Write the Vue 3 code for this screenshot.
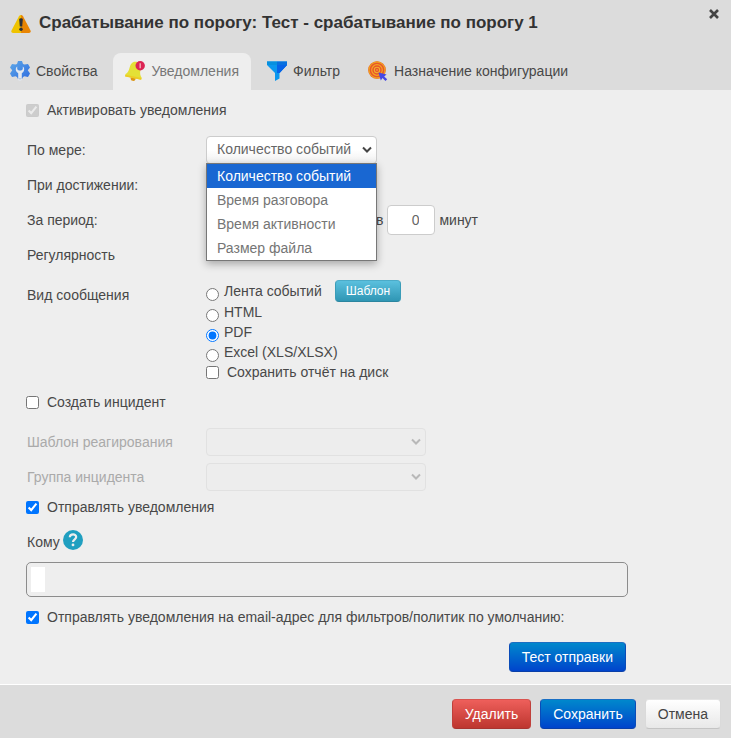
<script setup>
import { ref } from 'vue'

const measures = ['Количество событий', 'Время разговора', 'Время активности', 'Размер файла']
const measure = ref(measures[0])
const period = ref('0')
const format = ref('pdf')
const activate = ref(true)
const saveToDisk = ref(false)
const createIncident = ref(false)
const sendNotices = ref(true)
const sendDefault = ref(true)
const recipients = ref('')
</script>

<template>
  <div class="dialog">
    <header class="head">
      <div class="title-row">
        <svg class="warn" viewBox="0 0 20 18">
          <path d="M10 0Q11.300 0 12 1.200L19.500 15.500Q20.300 18 18 18H10Z" fill="#e88504" />
          <path d="M10 0Q8.700 0 8 1.200L.5 15.500Q-.3 18 2 18H10Z" fill="#efc300" />
          <path d="M8.200 4.500Q8.200 3.200 10 3.200T11.800 4.500L11.200 11.500H8.800Z" fill="#2d3038" />
          <circle cx="10" cy="14.300" r="1.700" fill="#2d3038" />
        </svg>
        <h1>Срабатывание по порогу: Тест - срабатывание по порогу 1</h1>
        <button class="close" type="button" aria-label="Закрыть">
          <svg viewBox="0 0 12 12"><path d="M2 2L10 10M10 2L2 10" stroke="#444" stroke-width="2.600" /></svg>
        </button>
      </div>
      <nav class="tabs">
        <a href="#" class="tab">
          <svg viewBox="0 0 20 20">
            <defs>
              <linearGradient id="gearFill" x1="0" y1="0" x2="1" y2="1">
                <stop offset="0" stop-color="#5fa9e8" /><stop offset="1" stop-color="#2f6de0" />
              </linearGradient>
            </defs>
            <path d="M8 0H12L13 3L14.500 3.600L18 3L20 6.500L17.800 9.300L20 12.500L18 16L14.500 15.200L13 16L12 18H8L7 16L5.500 15.200L2 16L0 12.500L2.200 9.300L0 6.500L2 3L5.500 3.600L7 3Z" fill="url(#gearFill)" />
            <path d="M7.200 5.500V8.200L8.800 9.500H11.200L12.800 8.200V5.500C14.400 6.600 14.800 9.500 13 11.200L11.800 12.300V18.200Q11.800 19.800 10 19.800T8.200 18.200V12.300L7 11.200C5.200 9.500 5.600 6.600 7.200 5.500Z" fill="#e3e8ef" />
            <circle cx="10" cy="17.800" r=".7" fill="#8fb0dc" />
          </svg>
          <span>Свойства</span>
        </a>
        <a href="#" class="tab active" aria-current="page">
          <svg viewBox="0 0 20 20">
            <g transform="rotate(12 9 11)">
              <circle cx="9.500" cy="17.400" r="2.500" fill="#dc9512" />
              <path d="M9.300 .5C5.200 .5 4 3.800 3.800 7.500C3.700 11 3.100 13 1.200 14.800V17H17.600V14.800C15.500 13 15 11 14.900 7.500C14.700 3.800 13.400 .5 9.300 .5Z" fill="#e4e036" />
              <path d="M1.200 15.400H17.600V17.200H1.200Z" fill="#edcb25" />
            </g>
            <circle cx="15.200" cy="4.700" r="4.700" fill="#dc2454" />
            <path d="M15.200 2.200V7.200" stroke="#f2a6b4" stroke-width="1.500" />
          </svg>
          <span>Уведомления</span>
        </a>
        <a href="#" class="tab">
          <svg viewBox="0 0 20 20">
            <path d="M0 .5H20V4L12.500 12V17.500L8 20V12L0 4Z" fill="#0b97ee" />
            <path d="M10 .5H20V4L12.500 12H10Z" fill="#0870df" />
            <path d="M0 .5H10V4H0Z" fill="#0790df" />
            <path d="M10 4H20L12.500 12H10Z" fill="#0763e8" />
          </svg>
          <span>Фильтр</span>
        </a>
        <a href="#" class="tab">
          <svg viewBox="0 0 20 20">
            <circle cx="9" cy="9" r="8.800" fill="#e9542b" />
            <circle cx="9" cy="9" r="8" fill="none" stroke="#f0a020" stroke-width="1.300" />
            <circle cx="9" cy="9" r="5.300" fill="none" stroke="#f2a823" stroke-width="1.200" />
            <circle cx="9" cy="9" r="2.700" fill="none" stroke="#f2b02d" stroke-width="1.100" />
            <circle cx="9" cy="9" r=".8" fill="#f5c040" />
            <path d="M10.500 11.500L18.600 13.500L16.200 15.500L19.200 18.200L17.500 20L14.500 17L12.800 19.500Z" fill="#4648e4" />
          </svg>
          <span>Назначение конфигурации</span>
        </a>
      </nav>
    </header>

    <main class="body">
      <label class="check first"><input v-model="activate" type="checkbox" disabled /><span>Активировать уведомления</span></label>

      <div class="row">
        <label for="measure">По мере:</label>
        <div class="picker">
          <select id="measure" v-model="measure" class="select">
            <option v-for="m in measures" :key="m">{{ m }}</option>
          </select>
          <svg class="chevron" viewBox="0 0 10 8"><path d="M1 1.500L5 5.500L9 1.500" /></svg>
          <ul class="menu" role="listbox">
            <li v-for="m in measures" :key="m" role="option" :aria-selected="m === measure" :class="{ chosen: m === measure }">{{ m }}</li>
          </ul>
        </div>
      </div>
      <div class="row"><span>При достижении:</span></div>
      <div class="row">
        <span>За период:</span>
        <div class="period">
          <label for="minutes">в</label>
          <input id="minutes" v-model="period" type="text" />
          <span>минут</span>
        </div>
      </div>
      <div class="row"><span>Регулярность</span></div>

      <div class="row kinds">
        <span class="kinds-label">Вид сообщения</span>
        <div class="options">
          <div class="feed">
            <label class="radio"><input v-model="format" type="radio" name="format" value="feed" /><span>Лента событий</span></label>
            <button type="button" class="btn info">Шаблон</button>
          </div>
          <label class="radio"><input v-model="format" type="radio" name="format" value="html" /><span>HTML</span></label>
          <label class="radio"><input v-model="format" type="radio" name="format" value="pdf" /><span>PDF</span></label>
          <label class="radio"><input v-model="format" type="radio" name="format" value="excel" /><span>Excel (XLS/XLSX)</span></label>
          <label class="check"><input v-model="saveToDisk" type="checkbox" /><span>Сохранить отчёт на диск</span></label>
        </div>
      </div>

      <label class="check incident"><input v-model="createIncident" type="checkbox" /><span>Создать инцидент</span></label>

      <div class="row off">
        <label for="reaction">Шаблон реагирования</label>
        <div class="picker wide">
          <select id="reaction" class="select" disabled></select>
          <svg class="chevron" viewBox="0 0 10 8"><path d="M1 1.500L5 5.500L9 1.500" /></svg>
        </div>
      </div>
      <div class="row off">
        <label for="group">Группа инцидента</label>
        <div class="picker wide">
          <select id="group" class="select" disabled></select>
          <svg class="chevron" viewBox="0 0 10 8"><path d="M1 1.500L5 5.500L9 1.500" /></svg>
        </div>
      </div>

      <label class="check send"><input v-model="sendNotices" type="checkbox" /><span>Отправлять уведомления</span></label>

      <div class="mail">
        <div class="to">
          <label for="recipients">Кому</label>
          <svg viewBox="0 0 20 20">
            <circle cx="10" cy="10" r="10" fill="#209fc0" />
            <path d="M6.800 7.200C7 3.600 13.300 3.500 13.200 7.100C13.200 9.300 10 9.400 10 12" fill="none" stroke="#eee" stroke-width="2.200" />
            <circle cx="10" cy="14.900" r="1.400" fill="#eee" />
          </svg>
        </div>
        <div class="tokens"><input id="recipients" v-model="recipients" type="text" /></div>
        <label class="check default"><input v-model="sendDefault" type="checkbox" /><span>Отправлять уведомления на email-адрес для фильтров/политик по умолчанию:</span></label>
        <button type="button" class="btn primary test">Тест отправки</button>
      </div>
    </main>

    <footer class="foot">
      <button type="button" class="btn danger">Удалить</button>
      <button type="button" class="btn primary">Сохранить</button>
      <button type="button" class="btn plain">Отмена</button>
    </footer>
  </div>
</template>

<style>
body {
  margin: 0;
  background: #eee;
}
</style>

<style scoped>
.dialog {
  display: flex;
  flex-direction: column;
  min-height: 100vh;
  background: #eee;
  color: #484848;
  font: 14px/20px "Liberation Sans", Arial, sans-serif;
}
.dialog * {
  box-sizing: border-box;
}
button,
input,
select {
  margin: 0;
  font: inherit;
}
svg {
  display: block;
  flex: none;
}
.head {
  background: #dcdcdc;
}
.title-row {
  display: flex;
  align-items: flex-start;
  gap: 8px;
  height: 53px;
  padding: 8px 11px 0;
}
.warn {
  width: 20px;
  height: 18px;
  margin-top: 7px;
}
h1 {
  flex: 1;
  margin: 0;
  font-size: 17px;
  line-height: 30px;
  color: #333;
}
.close {
  padding: 0;
  border: 0;
  background: none;
}
.close svg {
  width: 12px;
  height: 12px;
}
.tabs {
  display: flex;
  gap: 4px;
  padding-left: 10px;
}
.tab {
  display: flex;
  align-items: center;
  gap: 6px;
  height: 37px;
  padding: 0 12px 1px;
  border-radius: 8px 8px 0 0;
  color: #484848;
  text-decoration: none;
}
.tab:first-child {
  padding-left: 0;
}
.tab svg {
  width: 20px;
  height: 20px;
}
.tab.active {
  background: #eee;
  color: #777;
}
.body {
  flex: 1;
  padding: 10px 26px 12px;
}
.check,
.radio {
  display: flex;
  align-items: center;
}
.check {
  gap: 8px;
}
.check input,
.radio input {
  width: 13px;
  height: 13px;
  flex: none;
}
.first {
  margin-bottom: 12px;
}
.row {
  display: grid;
  grid-template-columns: 180px 1fr;
  align-items: center;
  min-height: 35px;
}
.row > :first-child,
.to {
  padding-left: 1px;
}
.picker {
  position: relative;
  width: 171px;
}
.picker.wide {
  width: 220px;
}
.select {
  display: block;
  width: 100%;
  height: 28px;
  padding: 0 10px 2px;
  appearance: none;
  border: 1px solid #ccc;
  border-radius: 4px;
  background: linear-gradient(#fff 50%, #f0f0f0);
  color: #666;
  opacity: 1;
}
.off {
  color: #aaa;
}
.off .select {
  border-color: #e1e1e1;
  background: #ededed;
}
.chevron {
  position: absolute;
  top: 10px;
  right: 5px;
  width: 10px;
  height: 8px;
  fill: none;
  stroke: #444;
  stroke-width: 2;
  pointer-events: none;
}
.off .chevron {
  stroke: #b8b8b8;
}
.menu {
  position: absolute;
  z-index: 2;
  top: 27px;
  left: 0;
  width: 100%;
  margin: 0;
  padding: 0;
  border: 1px solid #777;
  background: #fff;
  box-shadow: 0 3px 8px rgba(0, 0, 0, 0.3);
  color: #757575;
  list-style: none;
}
.menu li {
  padding: 2px 10px;
}
.menu .chosen {
  background: #1967d2;
  color: #fff;
}
.period {
  display: flex;
  align-items: center;
  gap: 4px;
  padding-left: 170px;
}
.period input {
  width: 48px;
  height: 30px;
  padding: 0 15px;
  border: 1px solid #ccc;
  border-radius: 4px;
  background: #fff;
  color: #666;
  text-align: right;
}
.kinds {
  align-items: start;
  padding-top: 8px;
}
.kinds-label {
  padding-top: 5px;
}
.feed {
  display: flex;
  align-items: center;
  gap: 13px;
}
.radio {
  gap: 5px;
  height: 20px;
}
.radio input {
  align-self: flex-end;
}
.incident {
  margin: 10px 0 12px;
}
.send {
  margin-top: 3px;
}
.mail {
  display: flex;
  flex-direction: column;
  max-width: 602px;
}
.to {
  display: flex;
  align-items: center;
  gap: 3px;
  margin: 11px 0 10px;
}
.to label {
  padding-top: 4px;
}
.to svg {
  width: 20px;
  height: 20px;
}
.tokens {
  height: 35px;
  padding: 4px;
  border: 1px solid #8c8c8c;
  border-radius: 5px;
}
.tokens input {
  display: block;
  width: 14px;
  height: 25px;
  padding: 0;
  border: 0;
  background: #fff;
}
.default {
  margin: 10px 0 15px;
}
.btn {
  height: 30px;
  padding: 0 12px;
  border: 1px solid transparent;
  border-radius: 4px;
  color: #fff;
  white-space: nowrap;
}
.primary {
  border-color: #1a6fc4 #0a4cb8 #0a3fa8;
  background: linear-gradient(#0088cc, #0044cc);
}
.danger {
  border-color: #d9534f #c0403b #a83430;
  background: linear-gradient(#ee5f5b, #bd362f);
}
.plain {
  border-color: #e4e4e4 #dadada #c4c4c4;
  background: linear-gradient(#fff, #e8e8e8);
  color: #444;
}
.info {
  height: 22px;
  padding: 0 10px;
  border-color: #4cabc8 #3a9cb8 #2b859f;
  background: linear-gradient(#5bc0de, #2f96b4);
  font-size: 12px;
  line-height: 20px;
}
.test {
  align-self: flex-end;
  margin-right: 2px;
}
.foot {
  display: flex;
  justify-content: flex-end;
  gap: 9px;
  padding: 14px 10px 9px;
  border-top: 1px solid #fff;
  background: #dcdcdc;
}
</style>
